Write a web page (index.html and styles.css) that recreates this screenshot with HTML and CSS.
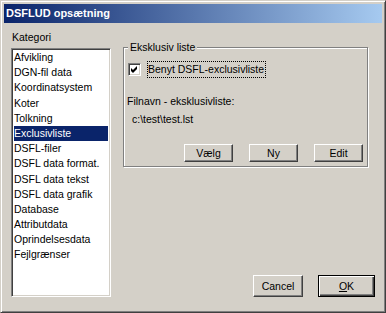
FILE: index.html
```html
<!DOCTYPE html>
<html>
<head>
<meta charset="utf-8">
<link rel="stylesheet" href="styles.css">
</head>
<body>
<div class="window">
  <div class="titlebar">DSFLUD opsætning</div>
  <div class="content">
    <div class="left">
      <div class="label">Kategori</div>
      <div class="listbox">
        <div class="item">Afvikling</div>
        <div class="item">DGN-fil data</div>
        <div class="item">Koordinatsystem</div>
        <div class="item">Koter</div>
        <div class="item">Tolkning</div>
        <div class="item selected">Exclusivliste</div>
        <div class="item">DSFL-filer</div>
        <div class="item">DSFL data format.</div>
        <div class="item">DSFL data tekst</div>
        <div class="item">DSFL data grafik</div>
        <div class="item">Database</div>
        <div class="item">Attributdata</div>
        <div class="item">Oprindelsesdata</div>
        <div class="item">Fejlgrænser</div>
      </div>
    </div>
    <div class="right">
      <div class="group">
        <span class="legend">Eksklusiv liste</span>
        <div class="check-row">
          <span class="checkbox">
            <svg width="7" height="7" viewBox="0 0 7 7"><path d="M0 2 L2 4 L6 0 L6 3 L2 7 L0 5 Z" fill="#000"/></svg>
          </span>
          <span class="focus">Benyt DSFL-exclusivliste</span>
        </div>
        <div class="filnavn">Filnavn - eksklusivliste:</div>
        <div class="path">c:\test\test.lst</div>
        <div class="group-buttons">
          <button class="btn">Vælg</button>
          <button class="btn">Ny</button>
          <button class="btn">Edit</button>
        </div>
      </div>
      <div class="dlg-buttons">
        <button class="btn btn-lg btn-cancel">Cancel</button>
        <button class="btn btn-lg btn-ok"><u>O</u>K</button>
      </div>
    </div>
  </div>
</div>
</body>
</html>
```

FILE: styles.css
```css
html, body {
  margin: 0;
  padding: 0;
  background: #d4d0c8;
}
body {
  font-family: "Liberation Sans", Arial, sans-serif;
  font-size: 10.5px;
  color: #000;
}
.window {
  width: 386px;
  height: 313px;
  box-sizing: border-box;
  border: 1px solid;
  border-color: #d4d0c8 #404040 #404040 #d4d0c8;
  box-shadow: inset 1px 1px #fff, inset -1px -1px #808080;
  padding: 3px;
  display: flex;
  flex-direction: column;
  background: #d4d0c8;
}
.titlebar {
  height: 19px;
  line-height: 19px;
  background: linear-gradient(90deg, #0a246a, #a6caf0);
  color: #fff;
  font-weight: bold;
  font-size: 11px;
  padding-left: 2px;
  white-space: nowrap;
}
.content {
  flex: 1;
  display: flex;
  gap: 12px;
  padding: 8px 7px 12px 7px;
}
.left {
  width: 100px;
  display: flex;
  flex-direction: column;
}
.label {
  line-height: 13px;
  padding-left: 1px;
  margin-bottom: 4px;
}
.listbox {
  flex: 1;
  box-sizing: border-box;
  background: #fff;
  border: 1px solid;
  border-color: #808080 #fff #fff #808080;
  box-shadow: inset 1px 1px #404040, inset -1px -1px #d4d0c8;
  padding: 1px;
  overflow: hidden;
}
.item {
  height: 15.2px;
  line-height: 15.2px;
  margin: 0 1px;
  white-space: nowrap;
}
.item.selected {
  background: #0a246a;
  color: #fff;
}
.right {
  flex: 1;
  display: flex;
  flex-direction: column;
  padding-top: 16px;
}
.group {
  position: relative;
  width: 245px;
  height: 120px;
  box-sizing: border-box;
  border: 1px solid #808080;
  box-shadow: 1px 1px 0 #fff, inset 1px 1px 0 #fff;
  padding: 13px 4px 4px 3px;
  display: flex;
  flex-direction: column;
}
.legend {
  position: absolute;
  top: -7px;
  left: 4px;
  padding: 0 2px;
  line-height: 13px;
  background: #d4d0c8;
}
.check-row {
  display: flex;
  align-items: center;
  height: 17px;
  margin-left: 1px;
  gap: 6px;
}
.checkbox {
  width: 13px;
  height: 13px;
  box-sizing: border-box;
  background: #fff;
  border: 1px solid;
  border-color: #808080 #fff #fff #808080;
  box-shadow: inset 1px 1px #404040, inset -1px -1px #d4d0c8;
  display: flex;
  align-items: center;
  justify-content: center;
}
.checkbox svg {
  display: block;
}
.focus {
  border: 1px dotted #000;
  padding: 0 1px 0 0;
  line-height: 15px;
  white-space: nowrap;
}
.filnavn {
  margin-top: 17px;
  line-height: 13px;
}
.path {
  margin-top: 5px;
  margin-left: 5px;
  line-height: 13px;
}
.group-buttons {
  margin-top: auto;
  display: flex;
  justify-content: flex-end;
  gap: 16px;
}
.btn {
  box-sizing: border-box;
  width: 49px;
  height: 18px;
  padding: 0;
  margin: 0;
  font: inherit;
  color: #000;
  background: #d4d0c8;
  border: 1px solid;
  border-color: #fff #404040 #404040 #fff;
  box-shadow: inset -1px -1px #808080;
  border-radius: 0;
  display: flex;
  align-items: center;
  justify-content: center;
}
.dlg-buttons {
  margin-top: auto;
  display: flex;
  justify-content: flex-end;
  gap: 15px;
}
.btn-lg {
  height: 22px;
}
.btn-cancel {
  width: 50px;
}
.btn-ok {
  width: 57px;
  border: 1px solid #000;
  box-shadow: inset 1px 1px #fff, inset -1px -1px #404040, inset -2px -2px #808080;
}
```
